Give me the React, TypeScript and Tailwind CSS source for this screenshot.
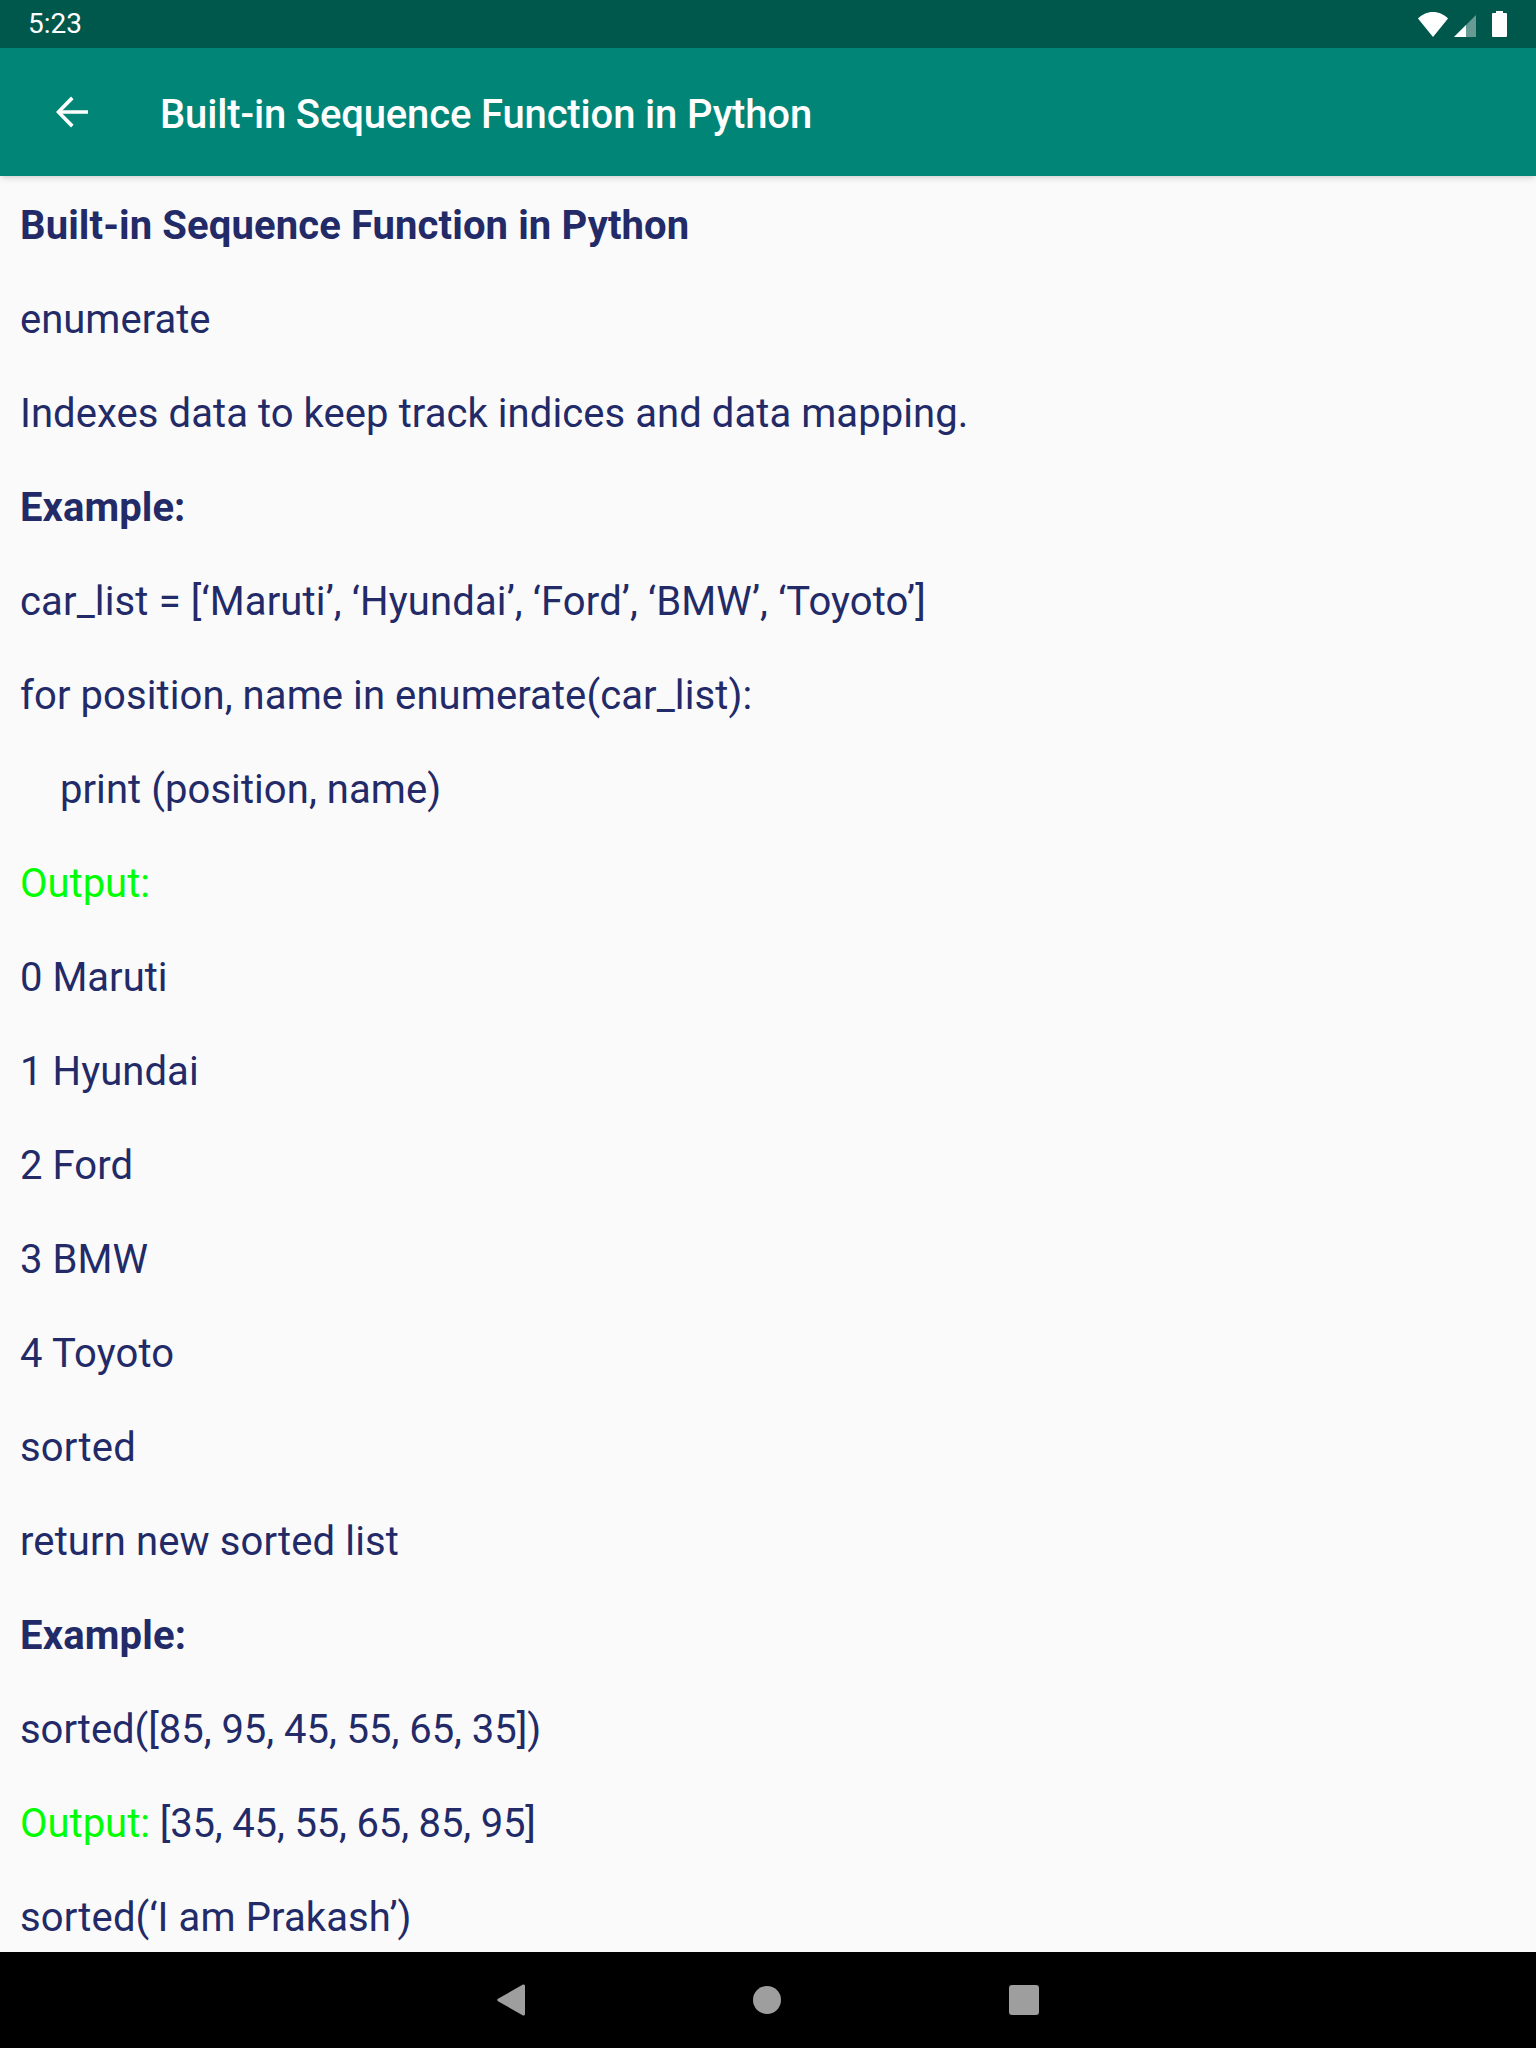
const LINES = [
  { text: 'Built-in Sequence Function in Python', bold: true, track: 'tracking-[0.11px]' },
  { text: 'enumerate', track: 'tracking-[0px]' },
  { text: 'Indexes data to keep track indices and data mapping.' },
  { text: 'Example:', bold: true },
  { text: 'car_list = [‘Maruti’, ‘Hyundai’, ‘Ford’, ‘BMW’, ‘Toyoto’]', track: 'tracking-[0.14px]' },
  { text: 'for position, name in enumerate(car_list):', track: 'tracking-[0.09px]' },
  { text: 'print (position, name)', indent: true },
  { text: 'Output:', green: true, track: 'tracking-[0px]' },
  { text: '0 Maruti', track: 'tracking-[0px]' },
  { text: '1 Hyundai' },
  { text: '2 Ford' },
  { text: '3 BMW' },
  { text: '4 Toyoto', track: 'tracking-[0.15px]' },
  { text: 'sorted', track: 'tracking-[0.2px]' },
  { text: 'return new sorted list', track: 'tracking-[0.12px]' },
  { text: 'Example:', bold: true, track: 'tracking-[0.15px]' },
  { text: 'sorted([85, 95, 45, 55, 65, 35])', track: 'tracking-[-0.04px]' },
  { text: 'Output:', green: true, track: 'tracking-[0px]', rest: ' [35, 45, 55, 65, 85, 95]' },
  { text: 'sorted(‘I am Prakash’)', track: 'tracking-[0.12px]' },
];

export default function App() {
  return (
    <div className="flex h-[2048px] w-[1536px] flex-col overflow-hidden bg-[#fafafa] font-['Roboto',sans-serif]">
      {/* status bar */}
      <div className="flex h-12 shrink-0 items-center justify-between bg-[#00574b] pl-[28px] pr-[29px] text-white">
        <span className="text-[28px] leading-none">5:23</span>
        <div className="flex items-end">
          <svg width="30" height="25" viewBox="0 0 30 25">
            <path d="M0 6.500C4 2.500 9 0 15 0s11 2.500 15 6.500L15 25z" fill="#fff" />
          </svg>
          <svg className="ml-[6px]" width="22" height="22" viewBox="0 0 22 22">
            <path d="M0 22L22 0v22z" fill="#fff" fillOpacity="0.4" />
            <path d="M0 22L12 10v12z" fill="#fff" />
          </svg>
          <svg className="ml-[16px]" width="15" height="26" viewBox="0 0 15 26">
            <path d="M4 2V0h7v2h3a1 1 0 0 1 1 1v22a1 1 0 0 1-1 1H1a1 1 0 0 1-1-1V3a1 1 0 0 1 1-1z" fill="#fff" />
          </svg>
        </div>
      </div>

      {/* app bar */}
      <div className="z-10 flex h-[128px] shrink-0 items-center bg-[#008577] text-white shadow-md">
        <svg className="ml-[48px] shrink-0" width="48" height="48" viewBox="0 0 24 24" fill="#fff">
          <path d="M20 11.100H7.300l5.500-5.500L11.500 4.300 4 12l7.500 7.700 1.300-1.300-5.500-5.500H20z" />
        </svg>
        <h1 className="ml-[64px] pt-[5px] text-[40px] font-medium leading-none tracking-[-0.15px]">Built-in Sequence Function in Python</h1>
      </div>

      {/* content */}
      <div className="flex-1 overflow-hidden px-5 pt-[3px] text-[40px] leading-[94px] text-[#232a68]">
        {LINES.map((line, i) => (
          <p key={i} className={`${line.bold ? 'font-bold' : ''} ${line.track ?? 'tracking-[0.07px]'}`}>
            {line.indent && <span className="whitespace-pre">{'    '}</span>}
            <span className={line.green ? 'text-[#00ff00]' : ''}>{line.text}</span>
            {line.rest && <span className="tracking-[-0.16px]">{line.rest}</span>}
          </p>
        ))}
      </div>

      {/* nav bar */}
      <div className="flex h-24 shrink-0 items-center justify-center gap-[228px] bg-black">
        <svg width="28" height="34" viewBox="0 0 28 34">
          <path d="M26 1.500a1.500 1.500 0 0 1 2 1.500v28a1.500 1.500 0 0 1-2 1.500L1 18.200a1.500 1.500 0 0 1 0-2.400z" fill="#9e9e9e" />
        </svg>
        <div className="h-7 w-7 rounded-full bg-[#9e9e9e]" />
        <div className="h-[30px] w-[30px] rounded-[3px] bg-[#9e9e9e]" />
      </div>
    </div>
  );
}
